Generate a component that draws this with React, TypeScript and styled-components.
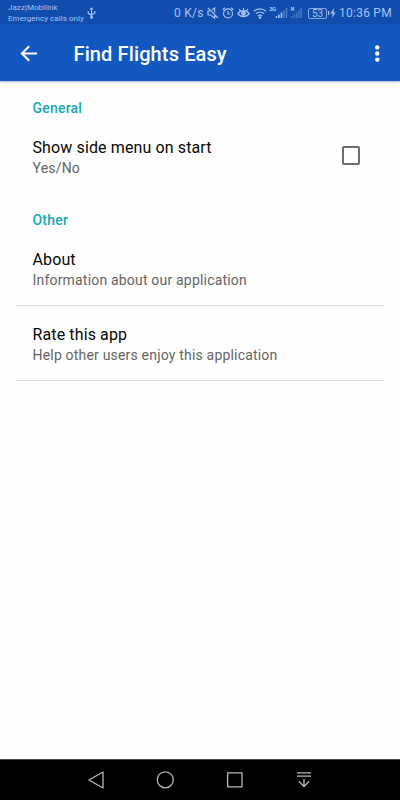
import React from "react";
import styled, { createGlobalStyle } from "styled-components";

const GlobalStyle = createGlobalStyle`
  * { box-sizing: border-box; }
  body { margin: 0; background: #fefefe; font-family: Roboto, "Noto Sans", sans-serif; }
`;

const Screen = styled.div`
  display: flex;
  flex-direction: column;
  width: 400px;
  height: 800px;
  overflow: hidden;
  background: #fefefe;
`;

const StatusBar = styled.header`
  display: flex;
  align-items: center;
  height: 24px;
  flex: none;
  padding: 0 8px;
  background: #114daf;
  color: #a6c3f1;
`;

const Carrier = styled.div`
  display: flex;
  flex-direction: column;
  width: 76px;
  padding-top: 2px;
  font-size: 8px;
  line-height: 11px;
  letter-spacing: 0.05px;
  white-space: nowrap;
`;

const StatusIcon = styled.svg<{ $gap?: number }>`
  flex: none;
  margin-left: ${(p) => p.$gap ?? 0}px;
  margin-top: 2px;
  fill: none;
  stroke: currentColor;
  stroke-width: 1.2;
  overflow: visible;
`;

const StatusTray = styled.div`
  display: flex;
  align-items: center;
  margin-left: auto;
  height: 24px;
`;

const StatusText = styled.span<{ $width: number; $gap?: number }>`
  width: ${(p) => p.$width}px;
  margin-left: ${(p) => p.$gap ?? 0}px;
  padding-top: 2px;
  font-size: 12px;
  line-height: 16px;
  letter-spacing: 0.25px;
  white-space: nowrap;
`;

const NetworkLabel = styled.span`
  width: 6px;
  margin-left: 2px;
  margin-bottom: 7px;
  font-size: 6px;
  font-weight: 700;
  line-height: 6px;
  letter-spacing: -0.4px;
`;

const Battery = styled.span`
  display: flex;
  align-items: center;
  justify-content: center;
  width: 19px;
  height: 11px;
  margin-left: 6px;
  margin-top: 2px;
  border: 1px solid #86a9e0;
  border-radius: 2px;
  font-size: 10px;
  line-height: 9px;
`;

const AppBar = styled.div`
  display: flex;
  align-items: center;
  flex: none;
  height: 57px;
  padding: 0 16px;
  background: #1358c0;
  color: #fff;
  box-shadow: 0 1px 2px rgba(40, 50, 110, 0.4);
`;

const IconButton = styled.button`
  display: flex;
  flex: none;
  padding: 0;
  border: 0;
  background: none;
  color: inherit;
`;

const Title = styled.h1`
  flex: 1;
  margin: 3px 0 0 32.5px;
  font-size: 20px;
  font-weight: 500;
  line-height: 24px;
  letter-spacing: 0.12px;
`;

const Settings = styled.main`
  flex: 1;
  padding: 1px 16px 0;
`;

const SectionTitle = styled.h2`
  margin: 0;
  padding: 16px 17px 1px 16.5px;
  color: #16a8b0;
  font-size: 14px;
  font-weight: 500;
  line-height: 20px;
  letter-spacing: 0.2px;
`;

const Row = styled.div<{ $divided?: boolean }>`
  display: flex;
  align-items: flex-start;
  justify-content: space-between;
  height: 75px;
  padding: 17px 24px 0 16.5px;
  border-bottom: 1px solid ${(p) => (p.$divided ? "#d8d8d8" : "transparent")};
`;

const RowTitle = styled.div`
  padding-top: 1px;
  color: #080808;
  font-size: 16px;
  line-height: 21px;
  letter-spacing: 0.12px;
`;

const RowSummary = styled.div`
  color: #646464;
  font-size: 14px;
  line-height: 20px;
  letter-spacing: 0.19px;
`;

const Checkbox = styled.input`
  appearance: none;
  width: 18px;
  height: 19px;
  margin: 10px 0 0;
  border: 2px solid #6c6c6c;
  border-radius: 2px;
`;

const NavBar = styled.nav`
  display: flex;
  justify-content: space-between;
  align-items: center;
  flex: none;
  height: 41px;
  padding: 0 86px;
  border-top: 1px solid #4a4a4a;
  background: #000;
  color: #b8b8b8;
`;

const NavIcon = styled.svg`
  fill: none;
  stroke: currentColor;
  stroke-width: 1.3;
  stroke-linejoin: round;
`;

interface Preference {
  title: string;
  summary: string;
  checkable?: boolean;
}

const sections: { name: string; items: Preference[] }[] = [
  {
    name: "General",
    items: [{ title: "Show side menu on start", summary: "Yes/No", checkable: true }],
  },
  {
    name: "Other",
    items: [
      { title: "About", summary: "Information about our application" },
      { title: "Rate this app", summary: "Help other users enjoy this application" },
    ],
  },
];

function StatusIcons() {
  return (
    <StatusTray>
      <StatusText $width={30}>0 K/s</StatusText>
      <StatusIcon $gap={3} width="12" height="12" viewBox="0 0 12 12">
        <path d="M3 4H1v4h2.4L7.6 11V8.4M5 2.8 7.6 1v4.4M1 .8l10 10.2" />
      </StatusIcon>
      <StatusIcon $gap={3} width="12" height="12" viewBox="0 0 12 12">
        <circle cx="6" cy="6.4" r="4.5" />
        <path d="M6 3.8v2.8l1.8 1M.7 2.7 3 .8M11.3 2.7 9 .8" />
      </StatusIcon>
      <StatusIcon $gap={3} width="13" height="12" viewBox="0 0 13 12">
        <path d="M.8 6.7c3-4 8.4-4 11.4 0-3 4-8.4 4-11.4 0zM6.5 3.5V1M3.5 4.2 2.2 2M9.5 4.2 10.8 2" />
        <circle cx="6.5" cy="6.5" r="1.8" fill="currentColor" />
      </StatusIcon>
      <StatusIcon $gap={3} width="14" height="12" viewBox="0 0 14 12">
        <path d="M.8 4.4c3.6-3.4 8.8-3.4 12.4 0M2.9 6.8c2.4-2.2 5.8-2.2 8.2 0M5 9c1.2-1 2.8-1 4 0" />
        <circle cx="7" cy="10.6" r=".7" fill="currentColor" />
      </StatusIcon>
      <NetworkLabel>3G</NetworkLabel>
      <StatusIcon width="12" height="12" viewBox="0 0 12 12">
        <path d="M1.5 9v2M4 7.5V11M6.5 5.5V11" strokeWidth="1.6" />
        <path d="M9 3.5V11M11.5 1v10" strokeWidth="1.5" opacity=".4" />
      </StatusIcon>
      <StatusIcon $gap={3} width="12" height="12" viewBox="0 0 12 12">
        <path d="M1 .2l3.2 3.2M4.2 .2 1 3.4" />
        <path d="M2 9v2M4.3 7.5V11M6.6 5.5V11M8.9 3.5V11M11.2 1v10" strokeWidth="1.5" opacity=".35" />
      </StatusIcon>
      <Battery>53</Battery>
      <StatusIcon $gap={1} width="8" height="12" viewBox="0 0 8 12">
        <path d="M.6 4v4" />
        <path d="M5.8 1.2 2.6 6.5h2.2L4.2 10.8 7.4 5.5H5.2z" fill="currentColor" strokeWidth=".2" />
      </StatusIcon>
      <StatusText $width={53} $gap={3}>10:36 PM</StatusText>
    </StatusTray>
  );
}

function PreferenceRow({ item, divided }: { item: Preference; divided: boolean }) {
  return (
    <Row $divided={divided}>
      <div>
        <RowTitle>{item.title}</RowTitle>
        <RowSummary>{item.summary}</RowSummary>
      </div>
      {item.checkable && <Checkbox type="checkbox" aria-label={item.title} />}
    </Row>
  );
}

export default function App() {
  return (
    <Screen>
      <GlobalStyle />
      <StatusBar>
        <Carrier>
          <span>Jazz|Mobilink</span>
          <span>Emergency calls only</span>
        </Carrier>
        <StatusIcon $gap={3} width="9" height="12" viewBox="0 0 9 12">
          <path d="M4.5 1v9M3.2 2.3 4.5 1l1.3 1.3M1.2 4v2.3l3.3 2M7.8 4v2l-3.3 2" />
          <circle cx="4.5" cy="10.3" r=".9" fill="currentColor" />
        </StatusIcon>
        <StatusIcons />
      </StatusBar>
      <AppBar>
        <IconButton aria-label="Back">
          <svg width="25" height="24" viewBox="0 0 25 24" fill="none" stroke="currentColor" strokeWidth="2">
            <path d="M21 12.5H6.3M13.2 5.2 5.9 12.5l7.3 7.3" />
          </svg>
        </IconButton>
        <Title>Find Flights Easy</Title>
        <IconButton aria-label="More options">
          <svg width="14" height="24" viewBox="0 0 14 24" fill="currentColor">
            <circle cx="7.3" cy="6.4" r="2.2" />
            <circle cx="7.3" cy="12.5" r="2.2" />
            <circle cx="7.3" cy="18.6" r="2.2" />
          </svg>
        </IconButton>
      </AppBar>
      <Settings>
        {sections.map((section) => (
          <section key={section.name}>
            <SectionTitle>{section.name}</SectionTitle>
            {section.items.map((item) => (
              <PreferenceRow key={item.title} item={item} divided={!item.checkable} />
            ))}
          </section>
        ))}
      </Settings>
      <NavBar>
        <NavIcon width="20" height="20" viewBox="0 0 20 20">
          <path d="M17 2v16L3 10z" />
        </NavIcon>
        <NavIcon width="20" height="20" viewBox="0 0 20 20">
          <circle cx="10.3" cy="9.8" r="8" />
        </NavIcon>
        <NavIcon width="20" height="20" viewBox="0 0 20 20">
          <rect x="2.6" y="2.8" width="14.4" height="14" />
        </NavIcon>
        <NavIcon width="20" height="20" viewBox="0 0 20 20">
          <path d="M3 2.8h14M3 6.2h14M10 9v7.5M4.8 11.3l5.2 5.2 5.2-5.2" />
        </NavIcon>
      </NavBar>
    </Screen>
  );
}
